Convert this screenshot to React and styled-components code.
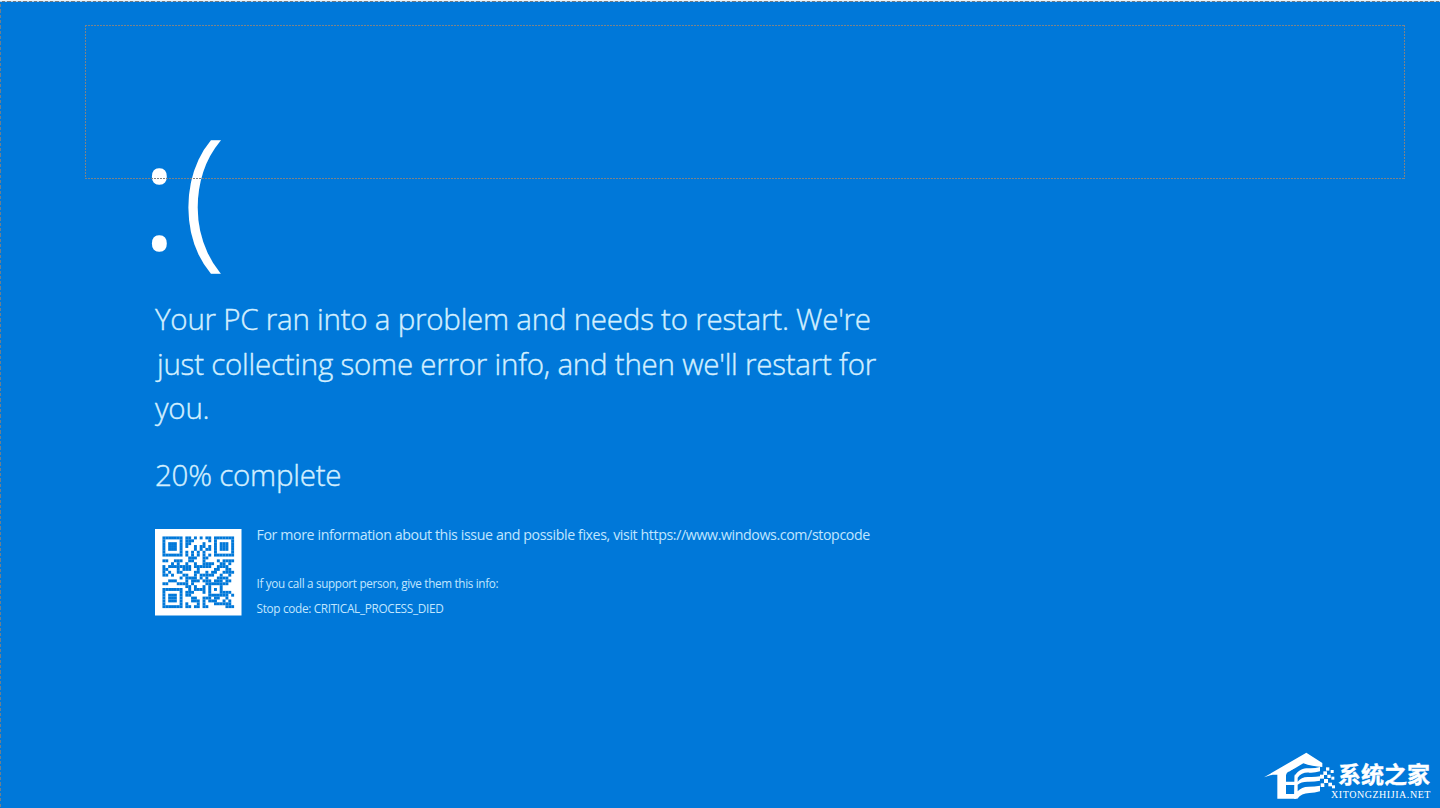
import React from 'react';
import styled, { createGlobalStyle } from 'styled-components';

// one hex number per row, 25 modules each, leftmost module is the highest bit
const QR_ROWS = [
  '1fdab7f', '105c141', '175845d', '1752d5d', '1742b5d',
  '1055441', '1fd557f', '000e600', '19cc42f', '029279a',
  '17fbf3c', '18b9066', '14c32cf', '1a32f92', '005ea3c',
  '0717776', '18f43fc', '001a510', '1fcbd50', '105c51e',
  '17581fd', '1746764', '17475ca', '105147e', '1fdb607',
];

const PIXELS = [
  [192, 58, 10], [184, 70, 11], [206, 66, 9], [174, 80, 12], [196, 80, 10],
  [186, 93, 12], [208, 86, 9], [199, 104, 11], [176, 106, 11], [210, 112, 9],
];

const GlobalStyle = createGlobalStyle`
  * {
    box-sizing: border-box;
  }
  body {
    margin: 0;
    background: #0078d9;
  }
`;

const Screen = styled.main`
  position: relative;
  height: 808px;
  padding: 118px 0 0 155px;
  overflow: hidden;
  background: #0078d9;
  color: #d3efff;
  font-family: "Open Sans", "Noto Sans", sans-serif;
`;

const TopEdge = styled.div`
  position: absolute;
  inset: 0 0 auto 0;
  height: 2px;
  border-top: 1px solid #eef4f8;
  background: repeating-linear-gradient(90deg, #a9d0ee 0 2px, #74797e 2px 5.33px);
`;

const LeftEdge = styled.div`
  position: absolute;
  inset: 2px auto 0 0;
  width: 1px;
  background: repeating-linear-gradient(180deg, transparent 0 2px, #6c8090 2px 5.33px);
`;

const Placeholder = styled.div`
  position: absolute;
  left: 85px;
  top: 25px;
  width: 1320px;
  height: 154px;
  --h: repeating-linear-gradient(90deg, #7c8388 0 2px, transparent 2px 3px);
  --v: repeating-linear-gradient(180deg, #7c8388 0 2px, transparent 2px 3px);
  background: var(--h) top / 100% 1px no-repeat,
    var(--h) bottom / 100% 1px no-repeat,
    var(--v) left / 1px 100% no-repeat,
    var(--v) right / 1px 100% no-repeat;
`;

const Face = styled.div`
  display: flex;
  align-items: baseline;
  height: 179px;
  margin-left: -13px;
  color: #fff;
  font-size: 152px;
  font-weight: 300;
  line-height: 146px;
`;

const Eyes = styled.span`
  width: 41px;
  font-size: 145px;
  -webkit-text-stroke: 3.4px #fff;
`;

const Mouth = styled.span`
  -webkit-text-stroke: 1.6px #fff;
`;

const Message = styled.p`
  margin: 0 0 22px;
  font-size: 29.5px;
  font-weight: 300;
  line-height: 44.5px;
  letter-spacing: -0.23px;
  white-space: nowrap;
  -webkit-text-stroke: 0.4px #d3efff;
`;

const Line = styled.span`
  display: block;
  width: max-content;
  padding-left: ${(p) => p.$indent || 0}px;
`;

const Details = styled.section`
  display: flex;
  gap: 15px;
  margin-top: 32px;
`;

const Code = styled.svg`
  width: 86.5px;
  height: 86.5px;
`;

const Info = styled.div`
  display: flex;
  flex-direction: column;
  margin-top: -4px;
  color: #c0e6ff;
  white-space: nowrap;
`;

const Note = styled.span`
  width: max-content;
  margin-bottom: ${(p) => p.$after || 0}px;
  font-size: ${(p) => p.$size}px;
  line-height: 20px;
  letter-spacing: ${(p) => p.$gap}px;
`;

const Brand = styled.footer`
  position: absolute;
  left: 1262px;
  top: 748px;
  display: flex;
  color: #fff;
`;

const House = styled.svg`
  width: 76px;
  height: 54px;
`;

const BrandText = styled.div`
  display: flex;
  flex-direction: column;
  white-space: nowrap;
`;

const BrandName = styled.span`
  padding-top: 13px;
  font: bold 23px/24px "Noto Sans CJK SC", sans-serif;
  -webkit-text-stroke: 0.4px #fff;
`;

const BrandUrl = styled.span`
  margin: 4px 0 0 -7px;
  font: 10px/12px "Liberation Serif", serif;
  letter-spacing: 0.55px;
`;

const QrCode = () => (
  <Code viewBox="-2.6 -2.6 30.2 30.2">
    <rect x="-2.6" y="-2.6" width="30.2" height="30.2" fill="#fff" />
    {QR_ROWS.map((row, y) =>
      parseInt(row, 16).toString(2).padStart(25, '0').split('').map((bit, x) =>
        bit === '1' && <rect key={x + '-' + y} x={x} y={y} width="1.02" height="1.02" fill="#0078d9" />
      )
    )}
  </Code>
);

const HouseLogo = () => (
  <House viewBox="0 0 228 162" fill="#fff">
    <path d="M6 88 133 14 181 45V57Q150 56 124 46L84 70V80H102V152H46V80H32Z" />
    <path d="M72 82Q74 72 84 70L98 62V101H72ZM72 111H98V138H72Z" fill="#0078d9" />
    <path d="M98 84C112 60 130 60 146 61Q160 61 174 57V70Q158 75 142 74C126 73 116 77 107 89V101Q118 86 140 87 158 88 174 85V98Q158 101 140 101 118 100 107 110V130Q118 116 140 116 158 116 174 113V130Q158 135 142 135 118 136 106 152H96Z" />
    {PIXELS.map(([x, y, s]) => (
      <rect key={x + '-' + y} x={x} y={y} width={s} height={s} />
    ))}
  </House>
);

const App = () => {
  return (
    <>
      <GlobalStyle />
      <Screen>
        <Face>
          <Eyes>:</Eyes>
          <Mouth>(</Mouth>
        </Face>
        <Message>
          <Line>Your PC ran into a problem and needs to restart. We're</Line>
          <Line $indent={2}>just collecting some error info, and then we'll restart for</Line>
          <Line>you.</Line>
        </Message>
        <Message>
          <Line>20% complete</Line>
        </Message>
        <Details>
          <QrCode />
          <Info>
            <Note $size={14.2} $gap={-0.39} $after={28}>
              For more information about this issue and possible fixes, visit https://www.windows.com/stopcode
            </Note>
            <Note $size={11.7} $gap={-0.32} $after={5}>If you call a support person, give them this info:</Note>
            <Note $size={11.8} $gap={-0.33}>Stop code: CRITICAL_PROCESS_DIED</Note>
          </Info>
        </Details>
        <Placeholder />
        <TopEdge />
        <LeftEdge />
        <Brand>
          <HouseLogo />
          <BrandText>
            <BrandName>系统之家</BrandName>
            <BrandUrl>XITONGZHIJIA.NET</BrandUrl>
          </BrandText>
        </Brand>
      </Screen>
    </>
  );
};

export default App;
